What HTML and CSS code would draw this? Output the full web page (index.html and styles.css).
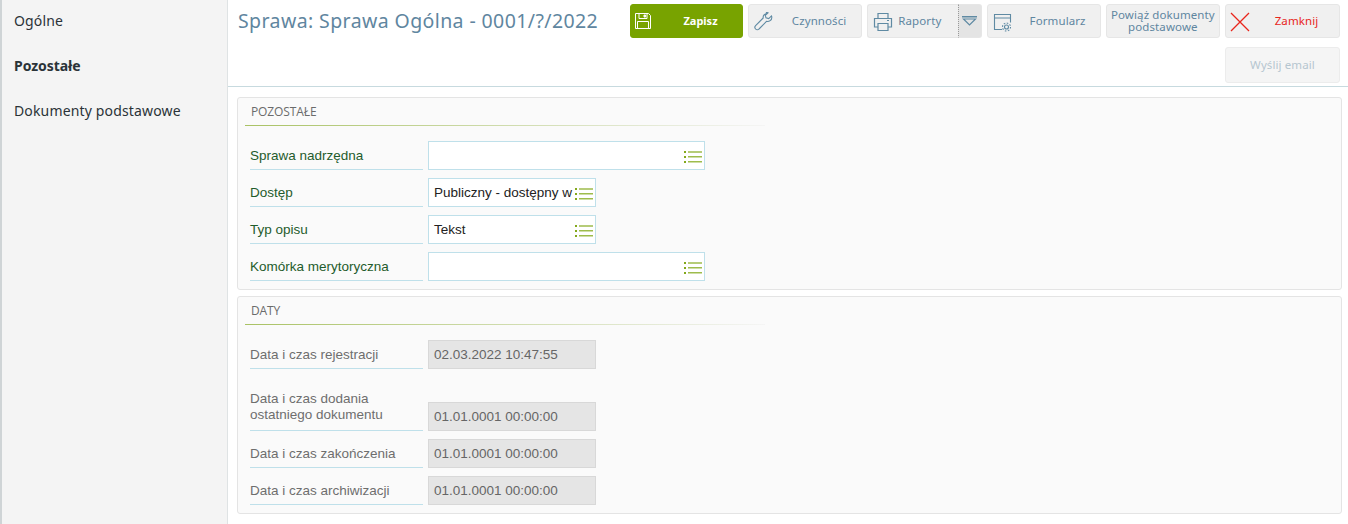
FILE: index.html
```html
<!DOCTYPE html>
<html lang="pl">
<head>
<meta charset="utf-8">
<title>Sprawa</title>
<link rel="stylesheet" href="styles.css">
</head>
<body>
<div class="app">
  <nav class="side">
    <a class="nav-item">Ogólne</a>
    <a class="nav-item active">Pozostałe</a>
    <a class="nav-item">Dokumenty podstawowe</a>
  </nav>
  <main class="main">
    <header class="head">
      <h1 class="title">Sprawa: Sprawa Ogólna - 0001/?/2022</h1>
      <div class="actions">
        <button class="btn save">
          <svg class="ico" width="18" height="18" viewBox="0 0 18 18" fill="none" stroke="#fff" stroke-width="1"><path d="M1.500 1.500h13l2 2v13h-15z"/><path d="M5 1.500v5h8v-5M3.500 16.500v-7h11v7"/><path d="M10 3h1.600v2H10z" fill="#fff"/></svg>
          <span class="lbl">Zapisz</span>
        </button>
        <button class="btn">
          <svg class="ico" width="20" height="20" viewBox="0 0 20 20" fill="none" stroke="#5f8aa3" stroke-width="1.100"><path d="M13 1.500c-2.400 0-4.200 2-3.800 4.500L1.600 13.600c-1 1-1 2.300 0 3.400s2.500 1 3.400 0l7.500-7.600c2.700.6 5.300-1.300 5.300-4 0-.6-.1-1.100-.3-1.500l-2.800 2.700-2.700-.7-.7-2.600 2.700-2.500c-.4-.2-1.100-.3-1.500-.3z"/></svg>
          <span class="lbl">Czynności</span>
        </button>
        <div class="split">
          <button class="btn split-main">
            <svg class="ico" width="20" height="20" viewBox="0 0 20 20" fill="none" stroke="#5f8aa3" stroke-width="1.200"><path d="M5 6V1.500h10V6M5 15H1.500V6.500h17V15H15"/><path d="M5 11.500h10v7H5z"/><path d="M14 8.500h2"/></svg>
            <span>Raporty</span>
          </button>
          <button class="caret" aria-label="Więcej">
            <svg width="15" height="10" viewBox="0 0 15 10"><path d="M0 0h15v1.500H0z" fill="#5f8aa3"/><path d="M1.500 3h12l-6 6z" fill="none" stroke="#5f8aa3" stroke-width="1.200"/></svg>
          </button>
        </div>
        <button class="btn">
          <svg class="ico" width="20" height="20" viewBox="0 0 20 20" fill="none" stroke="#5f8aa3" stroke-width="1.100"><path d="M9 17.500H1.500v-15h16v8M1.500 6h16" /><circle cx="13.500" cy="15" r="2" /><circle cx="13.500" cy="15" r="4" stroke-dasharray="1.600 1.500"/></svg>
          <span class="lbl">Formularz</span>
        </button>
        <button class="btn two">Powiąż dokumenty podstawowe</button>
        <button class="btn close">
          <svg class="ico" width="20" height="20" viewBox="0 0 20 20" fill="none" stroke="#e8261c" stroke-width="1.300"><path d="M1 1l18 18M19 1L1 19"/></svg>
          <span class="lbl">Zamknij</span>
        </button>
        <button class="btn mail" disabled>Wyślij email</button>
      </div>
    </header>
    <div class="content">
      <section class="panel">
        <h2 class="panel-title">POZOSTAŁE</h2>
        <div class="rows">
          <div class="row"><label class="label">Sprawa nadrzędna</label>
            <div class="input wide"><span class="val"></span>
              <svg class="list" width="18" height="12" viewBox="0 0 18 12"><path d="M0 0h2v2H0zM0 5h2v2H0zM0 10h2v2H0z" fill="#84a81c"/><path d="M4 1h14M4 5.800h14M4 10.800h14" stroke="#9ebc4c" stroke-width="1.400"/></svg></div></div>
          <div class="row"><label class="label">Dostęp</label>
            <div class="input"><span class="val">Publiczny - dostępny w</span>
              <svg class="list" width="18" height="12" viewBox="0 0 18 12"><path d="M0 0h2v2H0zM0 5h2v2H0zM0 10h2v2H0z" fill="#84a81c"/><path d="M4 1h14M4 5.800h14M4 10.800h14" stroke="#9ebc4c" stroke-width="1.400"/></svg></div></div>
          <div class="row"><label class="label">Typ opisu</label>
            <div class="input"><span class="val">Tekst</span>
              <svg class="list" width="18" height="12" viewBox="0 0 18 12"><path d="M0 0h2v2H0zM0 5h2v2H0zM0 10h2v2H0z" fill="#84a81c"/><path d="M4 1h14M4 5.800h14M4 10.800h14" stroke="#9ebc4c" stroke-width="1.400"/></svg></div></div>
          <div class="row"><label class="label">Komórka merytoryczna</label>
            <div class="input wide"><span class="val"></span>
              <svg class="list" width="18" height="12" viewBox="0 0 18 12"><path d="M0 0h2v2H0zM0 5h2v2H0zM0 10h2v2H0z" fill="#84a81c"/><path d="M4 1h14M4 5.800h14M4 10.800h14" stroke="#9ebc4c" stroke-width="1.400"/></svg></div></div>
        </div>
      </section>
      <section class="panel">
        <h2 class="panel-title">DATY</h2>
        <div class="rows dates">
          <div class="row first"><label class="label muted">Data i czas rejestracji</label><div class="input ro">02.03.2022 10:47:55</div></div>
          <div class="row tall"><label class="label muted">Data i czas dodania ostatniego dokumentu</label><div class="input ro">01.01.0001 00:00:00</div></div>
          <div class="row"><label class="label muted">Data i czas zakończenia</label><div class="input ro">01.01.0001 00:00:00</div></div>
          <div class="row"><label class="label muted">Data i czas archiwizacji</label><div class="input ro">01.01.0001 00:00:00</div></div>
        </div>
      </section>
    </div>
  </main>
</div>
</body>
</html>
```
FILE: styles.css
```css
* { box-sizing: border-box; }
html, body { margin: 0; height: 100%; }
body { font-family: "Liberation Sans", Arial, sans-serif; background: #fff; overflow: hidden; }
.app { display: flex; height: 524px; }
.side { width: 228px; flex: none; background: #f4f4f4; border-left: 2px solid #cfd4d6; border-right: 1px solid #dfe3e4; padding-top: 10px; }
.nav-item { display: block; height: 45px; padding-left: 12px; font: 14px/22px "Noto Sans", sans-serif; letter-spacing: .15px; color: #2b3338; }
.nav-item.active { font-weight: 700; letter-spacing: -.05px; }
.main { flex: 1; min-width: 0; }
.head { height: 87px; border-bottom: 1px solid #c7dadf; display: flex; padding: 4px 8px 0 10px; }
.title { margin: 4px 0 0; width: 382px; flex: none; font: 400 19.500px/25px "Noto Sans", sans-serif; letter-spacing: .4px; color: #5f86a0; white-space: nowrap; }
.actions { flex: 1; display: flex; flex-wrap: wrap; justify-content: flex-end; align-content: flex-start; gap: 9px 5px; }
.btn { width: 114.250px; height: 34px; padding: 0; border: 1px solid #e6e6e6; border-radius: 3px; background: #f0f0f0; color: #5f86a0; font: 400 11.500px/12px "Noto Sans", sans-serif; letter-spacing: .1px; display: flex; align-items: center; justify-content: center; position: relative; }
.btn.save { background: #78a300; border-color: #78a300; color: #fff; width: 113px; font-weight: 700; font-size: 11px; letter-spacing: 0; }
.lbl { margin-left: 28px; }
.ico { position: absolute; left: 5px; top: 7px; }
.btn.save .ico { left: 3px; top: 7px; }
.btn.close { color: #e8261c; width: 115px; }
.btn.close .ico { left: 4px; }
.btn.two { text-align: center; }
.btn.mail { color: #b5c6d0; background: #f5f5f5; border-color: #ececec; height: 36px; width: 115px; }
.split { display: flex; width: 114.250px; height: 34px; }
.split-main { width: 90.250px; border-right: 0; border-radius: 3px 0 0 3px; justify-content: flex-start; padding-left: 30px; }
.caret { width: 24px; height: 34px; padding: 0; border: 1px solid #e6e6e6; border-left: 1px dotted #999; border-radius: 0 3px 3px 0; background: #e4e4e4; display: flex; align-items: center; justify-content: center; }
.content { padding: 10px 6px 0 9px; display: flex; flex-direction: column; gap: 6px; }
.panel { border: 1px solid #e4e4e4; border-radius: 3px; background: #fafafa; padding: 0 0 8px 7px; }
.panel-title { margin: 0; height: 28px; width: 520px; padding: 6px 0 0 6px; font: 400 12px/16px "Open Sans", sans-serif; letter-spacing: -.1px; color: #6b6b6b; border-bottom: 1px solid transparent; border-image: linear-gradient(90deg, #a9c264, #f5f5f5) 1; }
.rows { padding: 15px 0 0 5px; display: flex; flex-direction: column; gap: 8px; }
.row { display: flex; gap: 5px; align-items: flex-end; min-height: 29px; }
.row.first { margin-bottom: 14px; }
.label { width: 173px; min-height: 29px; flex: none; padding-bottom: 5px; font-size: 13.500px; line-height: 16px; color: #1f5c2c; border-bottom: 1px solid #bfe0ea; display: flex; align-items: flex-end; }
.label.muted { color: #6e6e6e; }
.row.tall .label { padding-bottom: 7px; }
.input { width: 168px; height: 29px; border: 1px solid #bfe0ea; background: #fff; display: flex; align-items: center; justify-content: space-between; padding: 0 1px 0 5px; font-size: 13.500px; color: #222; }
.input.wide { width: 277px; }
.val { width: 138px; white-space: nowrap; margin-top: -1px; }
.list { margin-right: 1px; margin-top: 3px; }
.input.ro { background: #e5e5e5; border-color: #d8d8d8; color: #666; }
```
